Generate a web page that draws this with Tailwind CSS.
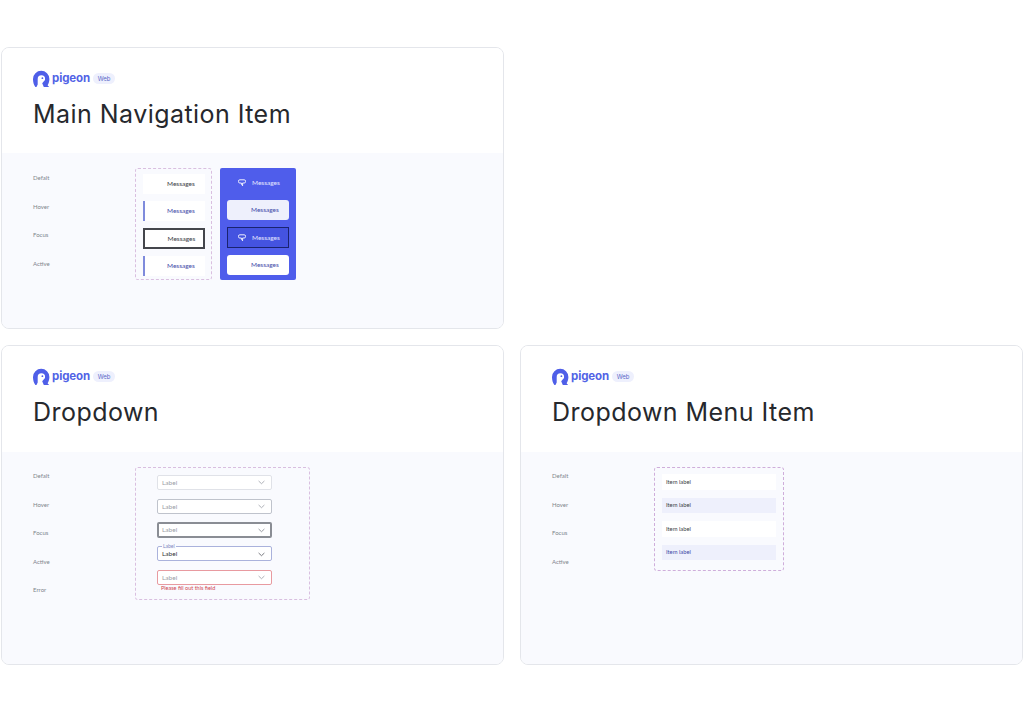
<!DOCTYPE html>
<html>
<head>
<meta charset="utf-8">
<script src="https://cdn.jsdelivr.net/npm/@tailwindcss/browser@4"></script>
</head>
<body class="bg-white antialiased font-['Lato','Liberation_Sans',sans-serif]">
<div class="w-[1024px] h-[715px] overflow-hidden pt-[47px] pl-[1px] pr-[1px] grid grid-cols-[503px_503px] grid-rows-[282px_319.500px] gap-x-[16px] gap-y-[16px] content-start">

  <!-- Card 1 -->
  <section class="rounded-[8px] border border-[#e4e6eb] overflow-hidden flex flex-col">
    <header class="h-[105px] shrink-0 bg-white pl-[31px] pt-[21px]">
      <div class="flex items-center h-[18px]">
        <svg class="w-[17px] h-[17px]" viewBox="0 0 17 17"><path fill="#4f5fe8" d="M0 9a8.2 8.2 0 0 1 16.4 0c0 2.500-.8 4.800-1.800 6.300l1.500 1.700h-5.300l-1.600-3.800 1.700-1.900c.8-.9 1.200-1.400 1.200-2.300a3.700 3.700 0 0 0-7.400 0v5.400l-1.600 3.400C1 15.800 0 12.500 0 9z"/><circle cx="9.400" cy="8.200" r="0.900" fill="#4f5fe8"/></svg>
        <span class="ml-[2px] mt-[1px] text-[11.500px] leading-none font-bold text-[#5263e6] font-['Inter',sans-serif] tracking-[-0.1px]">pigeon</span>
        <span class="ml-[3px] w-[22px] h-[11px] rounded-full bg-[#eef0fd] text-[6px] leading-[11px] text-center text-[#5a67c8] font-['Inter',sans-serif]">Web</span>
      </div>
      <h2 class="mt-[11px] text-[25px] leading-[32px] text-[#26282d] font-['Inter',sans-serif] tracking-[0.45px] whitespace-nowrap">Main Navigation Item</h2>
    </header>
    <div class="flex-1 bg-[#f9fafe] pl-[31px] pt-[11px] flex items-start">
      <div class="w-[102px] shrink-0 text-[6px] text-[#80848c]">
        <div class="h-[28.500px] leading-[28.500px]">Defalt</div>
        <div class="h-[28.500px] leading-[28.500px]">Hover</div>
        <div class="h-[28.500px] leading-[28.500px]">Focus</div>
        <div class="h-[28.500px] leading-[28.500px]">Active</div>
      </div>
      <div class="mt-[4px] w-[77px] h-[112px] rounded-[3px] border border-dashed border-[#d9bfe0] px-[6.500px] pt-[5px] flex flex-col gap-[7px] text-[6.500px]">
        <div class="h-[20px] bg-white flex items-center pl-[24.500px] text-[#3a3d45]">Messages</div>
        <div class="h-[20px] bg-white flex items-center pl-[22.500px] text-[#3f4aa8] border-l-2 border-[#7f8bdc]">Messages</div>
        <div class="h-[21px] bg-white flex items-center pl-[23px] text-[#3a3d45] border-2 border-[#44464c]">Messages</div>
        <div class="h-[20px] bg-white flex items-center pl-[22.500px] text-[#3f4aa8] border-l-2 border-[#7f8bdc]">Messages</div>
      </div>
      <div class="mt-[4px] ml-[8px] w-[76px] h-[112px] rounded-[2px] bg-[#4f5deb] px-[7px] pt-[5px] flex flex-col gap-[7px] text-[6.500px]">
        <div class="h-[20px] flex items-center pl-[11px] text-[#e4e7ff] gap-[6px]">
          <svg class="w-[8px] h-[8px]" viewBox="0 0 8 8" fill="none" stroke="#ffffff" stroke-width="0.900"><path d="M1.800.8h4.400a1.300 1.300 0 0 1 1.300 1.300v.6a1.300 1.300 0 0 1-1.300 1.300H4.600v2.800L3.400 5.200V4H1.800A1.300 1.300 0 0 1 .5 2.700v-.6A1.300 1.300 0 0 1 1.800.8z"/></svg>
          <span>Messages</span>
        </div>
        <div class="h-[20px] rounded-[3px] bg-[#eef0fc] flex items-center pl-[24px] text-[#3f4aa8]">Messages</div>
        <div class="h-[21px] border border-[#1a2370] bg-[#4453e0] flex items-center pl-[10px] text-[#e4e7ff] gap-[6px]">
          <svg class="w-[8px] h-[8px]" viewBox="0 0 8 8" fill="none" stroke="#ffffff" stroke-width="0.900"><path d="M1.800.8h4.400a1.300 1.300 0 0 1 1.300 1.300v.6a1.300 1.300 0 0 1-1.300 1.300H4.600v2.800L3.400 5.200V4H1.800A1.300 1.300 0 0 1 .5 2.700v-.6A1.300 1.300 0 0 1 1.800.8z"/></svg>
          <span>Messages</span>
        </div>
        <div class="h-[20px] rounded-[3px] bg-white flex items-center pl-[24px] text-[#3f4aa8]">Messages</div>
      </div>
    </div>
  </section>

  <div></div>

  <!-- Card 2 -->
  <section class="rounded-[8px] border border-[#e4e6eb] overflow-hidden flex flex-col">
    <header class="h-[106px] shrink-0 bg-white pl-[31px] pt-[21px]">
      <div class="flex items-center h-[18px]">
        <svg class="w-[17px] h-[17px]" viewBox="0 0 17 17"><path fill="#4f5fe8" d="M0 9a8.2 8.2 0 0 1 16.4 0c0 2.500-.8 4.800-1.800 6.300l1.500 1.700h-5.300l-1.600-3.800 1.700-1.900c.8-.9 1.200-1.400 1.200-2.300a3.700 3.700 0 0 0-7.400 0v5.400l-1.600 3.400C1 15.800 0 12.500 0 9z"/><circle cx="9.400" cy="8.200" r="0.900" fill="#4f5fe8"/></svg>
        <span class="ml-[2px] mt-[1px] text-[11.500px] leading-none font-bold text-[#5263e6] font-['Inter',sans-serif] tracking-[-0.1px]">pigeon</span>
        <span class="ml-[3px] w-[22px] h-[11px] rounded-full bg-[#eef0fd] text-[6px] leading-[11px] text-center text-[#5a67c8] font-['Inter',sans-serif]">Web</span>
      </div>
      <h2 class="mt-[11px] text-[25px] leading-[32px] text-[#26282d] font-['Inter',sans-serif] tracking-[0.45px] whitespace-nowrap">Dropdown</h2>
    </header>
    <div class="flex-1 bg-[#f9fafe] pl-[31px] pt-[10px] flex items-start">
      <div class="w-[102px] shrink-0 text-[6px] text-[#80848c]">
        <div class="h-[28.500px] leading-[28.500px]">Defalt</div>
        <div class="h-[28.500px] leading-[28.500px]">Hover</div>
        <div class="h-[28.500px] leading-[28.500px]">Focus</div>
        <div class="h-[28.500px] leading-[28.500px]">Active</div>
        <div class="h-[28.500px] leading-[28.500px]">Error</div>
      </div>
      <div class="mt-[5px] w-[175px] h-[133px] rounded-[3px] border border-dashed border-[#d9bfe0] pl-[21px] pt-[7px] text-[6.500px]">
        <div class="w-[115px] h-[15px] bg-white border border-[#e0e2e8] rounded-[2px] flex items-center justify-between pl-[4px] pr-[6px] text-[#9a9da6]">
          <span>Label</span>
          <svg class="w-[7px] h-[5px]" viewBox="0 0 7 5" fill="none" stroke="#9a9da6" stroke-width="0.800"><path d="M.6 1l2.900 2.700L6.400 1"/></svg>
        </div>
        <div class="mt-[9px] w-[115px] h-[15px] bg-white border border-[#bfc3cc] rounded-[2px] flex items-center justify-between pl-[4px] pr-[6px] text-[#9a9da6]">
          <span>Label</span>
          <svg class="w-[7px] h-[5px]" viewBox="0 0 7 5" fill="none" stroke="#9a9da6" stroke-width="0.800"><path d="M.6 1l2.900 2.700L6.400 1"/></svg>
        </div>
        <div class="mt-[8px] w-[115px] h-[16px] bg-white border-2 border-[#8a8d94] rounded-[2px] flex items-center justify-between pl-[3px] pr-[5px] text-[#9a9da6]">
          <span>Label</span>
          <svg class="w-[7px] h-[5px]" viewBox="0 0 7 5" fill="none" stroke="#80838a" stroke-width="0.800"><path d="M.6 1l2.900 2.700L6.400 1"/></svg>
        </div>
        <div class="relative mt-[8px] w-[115px] h-[15px] bg-white border border-[#aab2dc] rounded-[2px] flex items-center justify-between pl-[4px] pr-[6px] pt-[1px] text-[#33353b]">
          <span class="absolute left-[4px] -top-[3.500px] px-[1px] bg-[#f9fafe] text-[5px] leading-[5px] text-[#7d86c0]">Label</span>
          <span>Label</span>
          <svg class="w-[7px] h-[5px]" viewBox="0 0 7 5" fill="none" stroke="#55585f" stroke-width="0.800"><path d="M.6 1l2.900 2.700L6.400 1"/></svg>
        </div>
        <div class="mt-[9px] w-[115px] h-[15px] bg-white border border-[#e89aa0] rounded-[2px] flex items-center justify-between pl-[4px] pr-[6px] text-[#9a9da6]">
          <span>Label</span>
          <svg class="w-[7px] h-[5px]" viewBox="0 0 7 5" fill="none" stroke="#9a9da6" stroke-width="0.800"><path d="M.6 1l2.900 2.700L6.400 1"/></svg>
        </div>
        <div class="pl-[4px] text-[5.500px] leading-[7px] text-[#d0454f] whitespace-nowrap">Please fill out this field</div>
      </div>
    </div>
  </section>

  <!-- Card 3 -->
  <section class="rounded-[8px] border border-[#e4e6eb] overflow-hidden flex flex-col">
    <header class="h-[106px] shrink-0 bg-white pl-[31px] pt-[21px]">
      <div class="flex items-center h-[18px]">
        <svg class="w-[17px] h-[17px]" viewBox="0 0 17 17"><path fill="#4f5fe8" d="M0 9a8.2 8.2 0 0 1 16.4 0c0 2.500-.8 4.800-1.800 6.300l1.500 1.700h-5.300l-1.600-3.800 1.700-1.900c.8-.9 1.200-1.400 1.200-2.300a3.700 3.700 0 0 0-7.400 0v5.400l-1.600 3.400C1 15.800 0 12.500 0 9z"/><circle cx="9.400" cy="8.200" r="0.900" fill="#4f5fe8"/></svg>
        <span class="ml-[2px] mt-[1px] text-[11.500px] leading-none font-bold text-[#5263e6] font-['Inter',sans-serif] tracking-[-0.1px]">pigeon</span>
        <span class="ml-[3px] w-[22px] h-[11px] rounded-full bg-[#eef0fd] text-[6px] leading-[11px] text-center text-[#5a67c8] font-['Inter',sans-serif]">Web</span>
      </div>
      <h2 class="mt-[11px] text-[25px] leading-[32px] text-[#26282d] font-['Inter',sans-serif] tracking-[0.45px] whitespace-nowrap">Dropdown Menu Item</h2>
    </header>
    <div class="flex-1 bg-[#f9fafe] pl-[31px] pt-[10px] flex items-start">
      <div class="w-[102px] shrink-0 text-[6px] text-[#80848c]">
        <div class="h-[28.500px] leading-[28.500px]">Defalt</div>
        <div class="h-[28.500px] leading-[28.500px]">Hover</div>
        <div class="h-[28.500px] leading-[28.500px]">Focus</div>
        <div class="h-[28.500px] leading-[28.500px]">Active</div>
      </div>
      <div class="mt-[5px] w-[130px] h-[104px] rounded-[3px] border border-dashed border-[#cfaedb] px-[7px] pt-[6px] flex flex-col gap-[8px] text-[5.800px]">
        <div class="h-[16px] bg-white flex items-center pl-[4px] text-[#3a3d45]">Item label</div>
        <div class="h-[15px] bg-[#eef0fc] flex items-center pl-[4px] text-[#3a3d45]">Item label</div>
        <div class="h-[16px] bg-white flex items-center pl-[4px] text-[#3a3d45]">Item label</div>
        <div class="h-[15px] bg-[#eef0fc] flex items-center pl-[4px] text-[#3f4aa8]">Item label</div>
      </div>
    </div>
  </section>
</div>
</body>
</html>
